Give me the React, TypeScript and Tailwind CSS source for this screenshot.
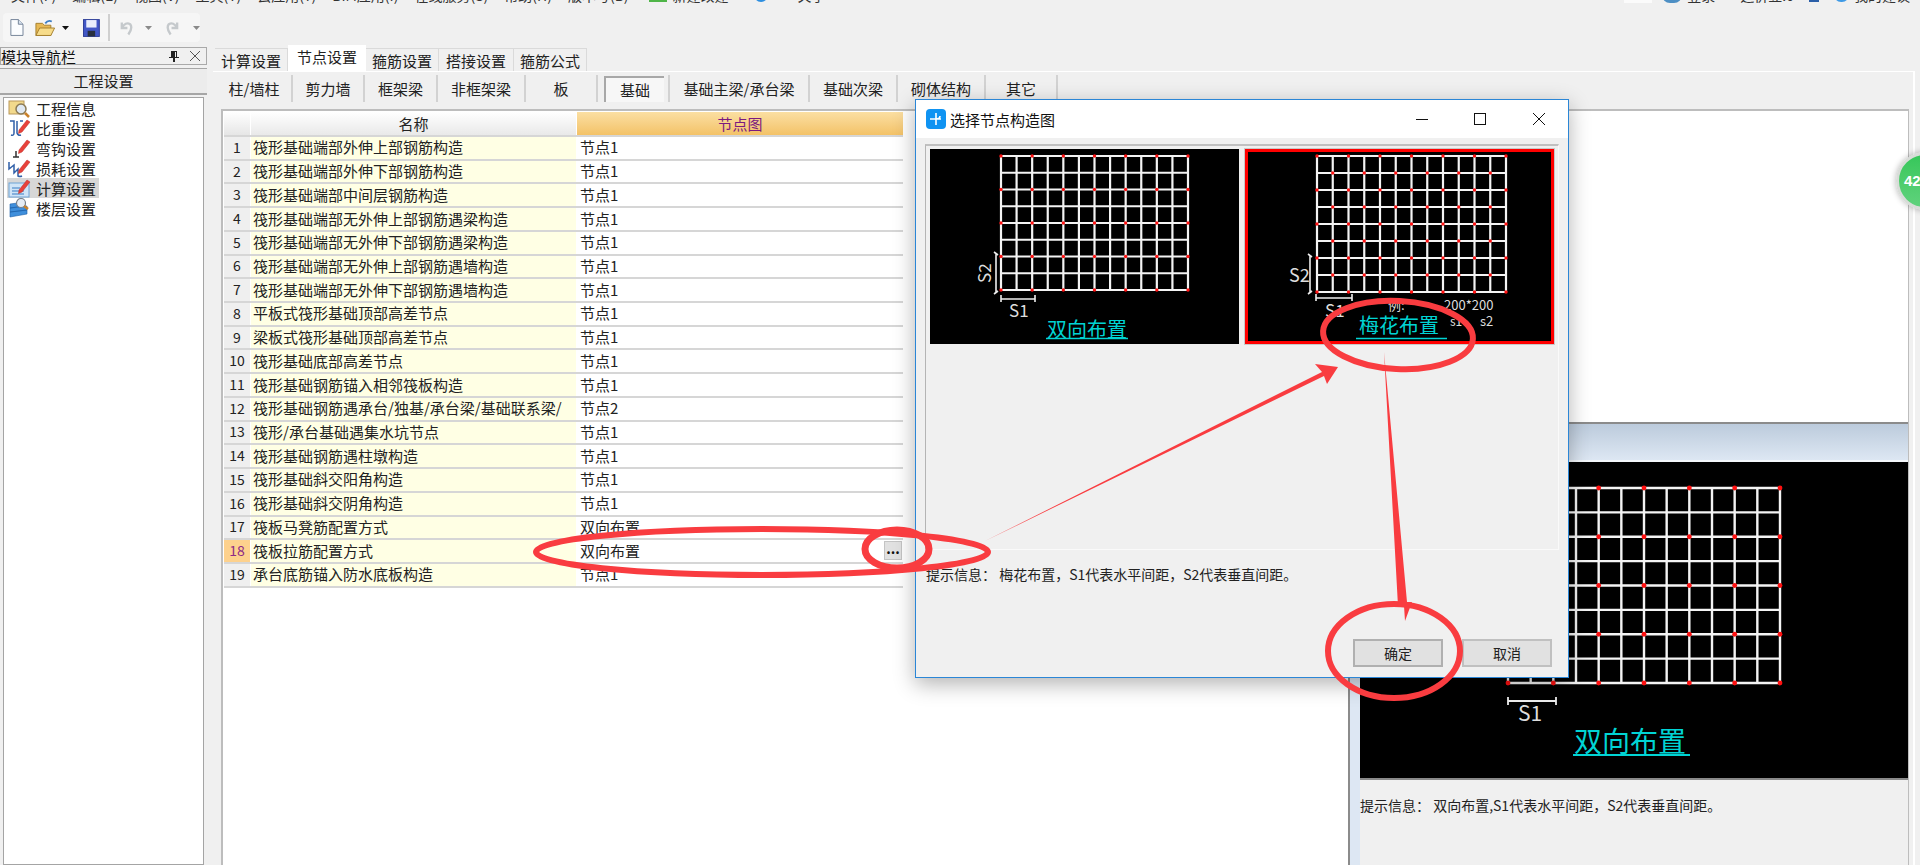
const rows: [string, string][] = [
  ['筏形基础端部外伸上部钢筋构造', '节点1'],
  ['筏形基础端部外伸下部钢筋构造', '节点1'],
  ['筏形基础端部中间层钢筋构造', '节点1'],
  ['筏形基础端部无外伸上部钢筋遇梁构造', '节点1'],
  ['筏形基础端部无外伸下部钢筋遇梁构造', '节点1'],
  ['筏形基础端部无外伸上部钢筋遇墙构造', '节点1'],
  ['筏形基础端部无外伸下部钢筋遇墙构造', '节点1'],
  ['平板式筏形基础顶部高差节点', '节点1'],
  ['梁板式筏形基础顶部高差节点', '节点1'],
  ['筏形基础底部高差节点', '节点1'],
  ['筏形基础钢筋锚入相邻筏板构造', '节点1'],
  ['筏形基础钢筋遇承台/独基/承台梁/基础联系梁/', '节点2'],
  ['筏形/承台基础遇集水坑节点', '节点1'],
  ['筏形基础钢筋遇柱墩构造', '节点1'],
  ['筏形基础斜交阳角构造', '节点1'],
  ['筏形基础斜交阴角构造', '节点1'],
  ['筏板马凳筋配置方式', '双向布置'],
  ['筏板拉筋配置方式', '双向布置'],
  ['承台底筋锚入防水底板构造', '节点1'],
];

const tabs = [
  { label: '计算设置', w: 'w-[73px]' },
  { label: '节点设置', w: 'w-[78px]', active: true },
  { label: '箍筋设置', w: 'w-[73px]' },
  { label: '搭接设置', w: 'w-[75px]' },
  { label: '箍筋公式', w: 'w-[73px]' },
];

const subTabs = [
  { label: '柱/墙柱', w: 'w-[76px]' },
  { label: '剪力墙', w: 'w-[72px]' },
  { label: '框架梁', w: 'w-[73px]' },
  { label: '非框架梁', w: 'w-[88px]' },
  { label: '板', w: 'w-[72px]' },
  { label: '基础', w: 'w-[72px]', pressed: true },
  { label: '基础主梁/承台梁', w: 'w-[140px]' },
  { label: '基础次梁', w: 'w-[88px]' },
  { label: '砌体结构', w: 'w-[88px]' },
  { label: '其它', w: 'w-[72px]' },
];

const menus = ['文件(F)', '编辑(E)', '视图(V)', '工具(T)', '云应用(Y)', 'BIM应用(I)', '在线服务(S)', '帮助(H)', '版本号(B)'];

// full-width colon and comma, as in the dialog's own hint text
const hintDialog = '提示信息\uFF1A 梅花布置\uFF0CS1代表水平间距\uFF0CS2代表垂直间距。';
const hintPreview = '提示信息\uFF1A 双向布置,S1代表水平间距\uFF0CS2代表垂直间距。';

function NavIcon({ kind }: { kind: number }) {
  const pencil = <path d="M12 12 L20 2 L23 4 L15 14 L11.5 15.5 Z" fill="#e8413a" stroke="#b92c26" strokeWidth="0.5" />;
  return (
    <svg width="24" height="20" viewBox="0 0 24 20" className="shrink-0">
      {kind === 0 && (
        <>
          <rect x="2" y="3" width="15" height="13" fill="#f2d98c" stroke="#b9975a" />
          <circle cx="14" cy="11" r="5" fill="#dfe8f2" stroke="#8b7a55" strokeWidth="1.5" />
          <path d="M18 15 L22 19" stroke="#c9812a" strokeWidth="2.5" />
        </>
      )}
      {kind === 1 && (
        <>
          <path d="M3 3 H7 V15 Q7 18 4 17 M10 3 V15 Q11 18 14 17 M13 3 L16 3" fill="none" stroke="#2f5fa8" strokeWidth="1.5" />
          {pencil}
        </>
      )}
      {kind === 2 && (
        <>
          <path d="M9 13 V19 M6 19 H12" fill="none" stroke="#333" strokeWidth="1.5" />
          {pencil}
        </>
      )}
      {kind === 3 && (
        <>
          <path d="M2 4 V11 L7 7 V15 L11 11 V18 Q13 19 15 18" fill="none" stroke="#2f5fa8" strokeWidth="1.5" />
          {pencil}
        </>
      )}
      {kind === 4 && (
        <>
          <rect x="2" y="5" width="20" height="14" fill="#cfe4f7" stroke="#6ea3d6" />
          <path d="M5 10 H13 M5 13 H17 M5 16 H17" stroke="#3a7cc4" strokeWidth="1.2" />
          {pencil}
        </>
      )}
      {kind === 5 && (
        <>
          <path d="M3 6 L18 4 V8 L3 10 Z M3 10 L20 8 V12 L3 14 Z M3 14 L20 12 V16 L3 19 Z" fill="#3f8fdc" stroke="#1d5fa8" strokeWidth="0.6" />
          <circle cx="14" cy="5" r="4.5" fill="#e6edf5" stroke="#77808c" strokeWidth="1.2" />
          <path d="M17 8 L21 11" stroke="#c9812a" strokeWidth="2.5" />
        </>
      )}
    </svg>
  );
}

function Caret({ muted }: { muted?: boolean }) {
  return (
    <svg width="7" height="4" viewBox="0 0 7 4" className="shrink-0">
      <path d="M0 0 H7 L3.5 4 Z" fill={muted ? '#8a8a8a' : '#111'} />
    </svg>
  );
}

function TopMenu() {
  // the capture starts below the menu text, only its lower edge shows
  return (
    <div className="h-[13px] shrink-0 overflow-hidden">
      <div className="mt-[-13px] flex h-[16px] items-center pl-[11px] pr-[10px] text-[14px] leading-none text-[#333]">
        <div className="flex gap-[16px] whitespace-nowrap">
          {menus.map((m) => <span key={m}>{m}</span>)}
        </div>
        <span className="ml-[20px] h-[14px] w-[18px] bg-[#4fb548]" />
        <span className="ml-[6px] whitespace-nowrap">新建改建</span>
        <span className="ml-[25px] h-[14px] w-[14px] rounded-full bg-[#2e8fe0]" />
        <span className="ml-[30px] whitespace-nowrap">关于</span>
        <span className="ml-auto h-[16px] w-[28px] bg-[#fbfbfb]" />
        <span className="ml-[10px] h-[16px] w-[20px] rounded-full bg-[#4d8fc4]" />
        <span className="ml-[5px] whitespace-nowrap">登录</span>
        <span className="ml-[25px] whitespace-nowrap">造价豆:0</span>
        <span className="ml-[15px] h-[14px] w-[10px] bg-[#2b5fa8]" />
        <span className="ml-[15px] h-[14px] w-[15px] rounded-full bg-[#3f9ae6]" />
        <span className="ml-[5px] whitespace-nowrap">我的建议</span>
      </div>
    </div>
  );
}

function Toolbar() {
  return (
    <div className="ml-[3px] flex h-[29px] w-[197px] items-center rounded-sm bg-[#f6f6f6] pl-[6px]">
      <svg width="16" height="19" viewBox="0 0 16 19">
        <path d="M2 1 H10 L15 6 V18 H2 Z" fill="#fbfdff" stroke="#6f7f95" />
        <path d="M10 1 V6 H15" fill="#d6e1ee" stroke="#6f7f95" />
      </svg>
      <svg width="22" height="20" viewBox="0 0 22 20" className="ml-[11px]">
        <path d="M1 5 H8 L10 7 H17 V18 H1 Z" fill="#e7b955" stroke="#a27d2c" />
        <path d="M1 18 L5 10 H21 L17 18 Z" fill="#f7dc8a" stroke="#a27d2c" />
        <path d="M11 5 Q14 1 18 3" fill="none" stroke="#3f7fc4" strokeWidth="2" />
      </svg>
      <span className="ml-[7px]"><Caret /></span>
      <svg width="18" height="20" viewBox="0 0 18 20" className="ml-[14px]">
        <rect x="0.5" y="1" width="17" height="18" fill="#4257c6" stroke="#2a3a94" />
        <rect x="3.5" y="1.5" width="11" height="8" fill="#e9eefc" />
        <rect x="5" y="13" width="8" height="6" fill="#28303f" />
      </svg>
      <div className="ml-[8px] h-[27px] w-[2px] bg-[#d0d0d0]" />
      <svg width="16" height="18" viewBox="0 0 16 18" className="ml-[9px]">
        <path d="M3 3 V9 H9 M3 9 Q7 2 12 5 Q15 9 10 16" fill="none" stroke="#c5c9cc" strokeWidth="2.5" />
      </svg>
      <span className="ml-[11px]"><Caret muted /></span>
      <svg width="16" height="18" viewBox="0 0 16 18" className="ml-[13px]">
        <path d="M13 3 V9 H7 M13 9 Q9 2 4 5 Q1 9 6 16" fill="none" stroke="#c5c9cc" strokeWidth="2.5" />
      </svg>
      <span className="ml-[13px]"><Caret muted /></span>
    </div>
  );
}

function LeftPanel() {
  const items = ['工程信息', '比重设置', '弯钩设置', '损耗设置', '计算设置', '楼层设置'];
  return (
    <div className="flex w-[207px] shrink-0 flex-col">
      <div className="flex h-[18px] items-center justify-between border border-[#a9a9a9] bg-[#f0f0f0] pr-[6px] text-[15px] leading-none text-[#111]">
        <span>模块导航栏</span>
        <div className="flex items-center gap-[11px]">
          <svg width="10" height="12" viewBox="0 0 10 12">
            <path d="M2 1 H8 V7 H10 V8 H6 V12 H4 V8 H0 V7 H2 Z M6 2 V7 H7 V2 Z" fill="#222" fillRule="evenodd" />
          </svg>
          <svg width="10" height="10" viewBox="0 0 10 10">
            <path d="M0 0 L10 10 M10 0 L0 10" stroke="#555" strokeWidth="1" />
          </svg>
        </div>
      </div>
      <div className="mt-[3px] flex h-[27px] items-center justify-center border-b-2 border-t border-[#a6a6a6] bg-[#ececec] text-[15px] text-[#222]">
        工程设置
      </div>
      <div className="mt-[2px] ml-[3px] mr-[3px] flex-1 border border-[#a4a4a4] bg-white pl-[3px]">
        {items.map((item, i) => (
          <div key={item} className={`flex h-[20px] w-[92px] items-center gap-[5px] text-[15px] leading-none text-[#222] ${i === 4 ? 'bg-[#d7d7d7]' : ''}`}>
            <NavIcon kind={i} />
            <span className="whitespace-nowrap">{item}</span>
          </div>
        ))}
      </div>
    </div>
  );
}

function TabBar() {
  return (
    <div className="flex h-[24px] items-end pl-[8px]">
      {tabs.map((t) => (
        <div
          key={t.label}
          className={`flex items-center justify-center text-[15px] leading-none text-[#222] ${t.w} ${
            t.active ? 'h-[26px] bg-white pb-[4px]' : 'h-[23px] border-r border-t border-[#dadada] bg-[#f0f0f0]'
          }`}
        >
          {t.label}
        </div>
      ))}
    </div>
  );
}

function SubBar() {
  return (
    <div className="flex h-[37px] items-start bg-[#f0f0f0] pl-[4px] pt-[3px]">
      {subTabs.map((t) => (
        <div key={t.label} className={`flex h-[27px] items-center justify-center border-r-2 border-[#d2d2d2] text-[15px] leading-none text-[#222] ${t.w}`}>
          {t.pressed ? (
            <span className="ml-[2px] flex h-[26px] w-[60px] items-center justify-center border-l-2 border-t-2 border-[#a8a8a8] bg-[#f7f7f7]">{t.label}</span>
          ) : (
            t.label
          )}
        </div>
      ))}
    </div>
  );
}

function NodeTable() {
  return (
    <div className="w-[680px] shrink-0 pl-[1px] pt-[1px] text-[15px] leading-none text-[#222]">
      <div className="flex h-[23px]">
        <div className="mr-[1px] w-[26px] bg-gradient-to-b from-white to-[#e6e6e6]" />
        <div className="mr-[1px] flex w-[325px] items-center justify-center bg-gradient-to-b from-white to-[#e9e9e9]">名称</div>
        <div className="flex w-[326px] items-center justify-center bg-gradient-to-b from-[#fbdfa2] to-[#f3c267] text-[#7b1a80]">节点图</div>
      </div>
      {rows.map(([name, value], i) => {
        const current = i === 17;
        return (
          <div key={i} className="flex h-[23.72px] border-t-2 border-[#d6d6d6]">
            <div className={`mr-[1px] flex w-[26px] items-center justify-center pb-[2px] text-[14px] ${current ? 'bg-[#fdd18d] text-[#8e2a86]' : 'bg-[#efefef]'}`}>{i + 1}</div>
            <div className="mr-[1px] flex w-[325px] items-center overflow-hidden whitespace-nowrap bg-[#ffffe4] pb-[2px] pl-[2px]">{name}</div>
            <div className="relative flex w-[326px] items-center bg-white pb-[2px] pl-[3px]">
              {value}
              {current && (
                <div className="absolute right-[1px] top-[1px] flex h-[19px] w-[18px] items-center justify-center border border-[#c4c4c4] bg-[#e1e1e1] pb-[6px] text-[14px] font-bold text-[#111]">
                  ...
                </div>
              )}
            </div>
          </div>
        );
      })}
      <div className="h-[2px] border-t-2 border-[#d6d6d6]" />
    </div>
  );
}

function range(n: number, start: number, step: number) {
  return Array.from({ length: n }, (_, i) => start + i * step);
}

// rebar plan: 12 x 8 cells, red ties on every second crossing
function PlanGrid({ x, y, w, h, staggered, stroke = 2.2, dot = 1.7 }: { x: number; y: number; w: number; h: number; staggered?: boolean; stroke?: number; dot?: number }) {
  const xs = range(13, x, w / 12);
  const ys = range(9, y, h / 8);
  return (
    <g>
      {xs.map((v) => <line key={v} x1={v} x2={v} y1={y} y2={y + h} stroke="#f4f4f4" strokeWidth={stroke} />)}
      {ys.map((v) => <line key={v} x1={x} x2={x + w} y1={v} y2={v} stroke="#f4f4f4" strokeWidth={stroke} />)}
      {xs.map((vx, i) =>
        ys.map((vy, j) =>
          (i % 2 === 0 && j % 2 === 0) || (staggered && i % 2 === 1 && j % 2 === 1) ? (
            <circle key={`${i}-${j}`} cx={vx} cy={vy} r={dot} fill="#ff1010" />
          ) : null,
        ),
      )}
    </g>
  );
}

function TwoWayTile() {
  return (
    <div className="h-[195px] w-[309px] bg-black">
      <svg width="309" height="195" viewBox="0 0 309 195" fontFamily="'Noto Sans CJK SC', sans-serif">
        <PlanGrid x={71} y={7} w={187} h={134} />
        <path d="M66 104 V144 M64 103 L68 106 M64 145 L68 142" stroke="#eee" strokeWidth="1.6" fill="none" />
        <text transform="translate(61 134) rotate(-90)" fontSize="17" fill="#ddd">S2</text>
        <path d="M71 150 H105 M71 146 V153 M105 146 V153" stroke="#eee" strokeWidth="1.6" fill="none" />
        <text x="79" y="168" fontSize="17" fill="#ddd">S1</text>
        <text x="117" y="188" fontSize="20" fill="#00d4d4">双向布置</text>
        <line x1="116" x2="198" y1="189.5" y2="189.5" stroke="#00d4d4" strokeWidth="1.5" />
      </svg>
    </div>
  );
}

function QuincunxTile() {
  return (
    <div className="h-[195px] w-[309px] border-[3px] border-[#ff0000] bg-black shadow-[0_0_0_1px_#c8c8c8]">
      <svg width="303" height="189" viewBox="3 3 303 189" fontFamily="'Noto Sans CJK SC', sans-serif">
        <PlanGrid x={72} y={7} w={189} h={136} staggered />
        <path d="M65 106 V144 M63 105 L67 108 M63 145 L67 142" stroke="#eee" strokeWidth="1.6" fill="none" />
        <text x="44" y="133" fontSize="18" fill="#ddd">S2</text>
        <path d="M71 149 H107 M71 145 V152 M107 145 V152" stroke="#eee" strokeWidth="1.6" fill="none" />
        <text x="80" y="168" fontSize="17" fill="#ddd">S1</text>
        <text x="143" y="161" fontSize="13" fill="#ddd">例:</text>
        <text x="199" y="161" fontSize="13" fill="#ddd">200*200</text>
        <text x="205" y="177" fontSize="12" fill="#ddd">s1</text>
        <text x="235" y="177" fontSize="13" fill="#ddd">s2</text>
        <text x="114" y="184" fontSize="20" fill="#00d4d4">梅花布置</text>
        <line x1="111" x2="202" y1="189.5" y2="189.5" stroke="#00d4d4" strokeWidth="1.5" />
      </svg>
    </div>
  );
}

function PreviewPanel() {
  return (
    <div className="ml-auto mt-[311px] w-[560px] flex-1 border-l-2 border-t-2 border-[#8b8b8b] bg-[#dde7f3]">
      <div className="h-[36px] bg-gradient-to-b from-[#bccbdc] to-[#dde7f3]" />
      <div className="ml-[10px] h-[320px] border-b-2 border-t-2 border-b-[#8a8a8a] border-t-[#f4f7fb] bg-black">
        <svg width="538" height="316" viewBox="0 0 538 316" fontFamily="'Noto Sans CJK SC', sans-serif">
          <PlanGrid x={148} y={26} w={272} h={195} stroke={2.4} dot={2.4} />
          <path d="M148 239 H196 M148 235 V243 M196 235 V243" stroke="#eee" strokeWidth="1.8" fill="none" />
          <text x="158" y="259" fontSize="21" fill="#ddd">S1</text>
          <text x="214" y="290" fontSize="28" fill="#00d4d4">双向布置</text>
          <line x1="213" x2="330" y1="293" y2="293" stroke="#00d4d4" strokeWidth="2" />
        </svg>
      </div>
      <div className="ml-[10px] h-full bg-[#f0f0f0] pt-[18px] text-[14px] leading-none whitespace-pre text-[#222]">
        {hintPreview}
      </div>
    </div>
  );
}

function NodeDialog() {
  return (
    <div className="absolute left-[915px] top-[99px] z-20 flex h-[579px] w-[654px] flex-col border border-[#2b86d6] bg-[#f0f0f0] shadow-[0_6px_20px_rgba(0,0,0,0.3)]">
      <div className="flex h-[38px] shrink-0 items-center bg-white pl-[10px] text-[15px] leading-none text-[#111]">
        <div className="flex h-[20px] w-[20px] items-center justify-center rounded-[4px] bg-[#0f93f2]">
          <svg width="14" height="14" viewBox="0 0 14 14">
            <path d="M7 1 V13 M1 7 H7 Q11 7 11 4 M7 7 H12" fill="none" stroke="white" strokeWidth="1.6" />
          </svg>
        </div>
        <span className="ml-[4px]">选择节点构造图</span>
        <div className="ml-auto flex h-full items-center pr-[23px]">
          <svg width="12" height="12" viewBox="0 0 12 12"><line x1="0" x2="12" y1="6.5" y2="6.5" stroke="#111" /></svg>
          <svg width="12" height="12" viewBox="0 0 12 12" className="ml-[46px]"><rect x="0.5" y="0.5" width="11" height="11" fill="none" stroke="#111" /></svg>
          <svg width="12" height="12" viewBox="0 0 12 12" className="ml-[47px]"><path d="M0 0 L12 12 M12 0 L0 12" stroke="#111" /></svg>
        </div>
      </div>
      <div className="ml-[9px] mr-[9px] mt-[6px] h-[406px] shrink-0 border-b border-l border-r border-t-2 border-b-[#fafafa] border-l-[#b4b4b4] border-r-[#fafafa] border-t-[#c0c0c0] pl-[4px] pt-[3px]">
        <div className="flex gap-[6px]">
          <TwoWayTile />
          <QuincunxTile />
        </div>
      </div>
      <div className="ml-[10px] mt-[17px] text-[14px] leading-none whitespace-pre text-[#222]">
        {hintDialog}
      </div>
      <div className="mt-auto mb-[10px] flex justify-end gap-[19px] pr-[16px] text-[14px] text-[#222]">
        <button className="h-[28px] w-[90px] border-2 border-[#b0b0b0] bg-[#e1e1e1]">确定</button>
        <button className="h-[28px] w-[90px] border-2 border-[#c0c0c0] bg-[#e1e1e1]">取消</button>
      </div>
    </div>
  );
}

function Annotations() {
  const red = '#f93c40';
  return (
    <svg className="pointer-events-none absolute left-0 top-0 z-30" width="1920" height="865" viewBox="0 0 1920 865">
      <ellipse cx="762" cy="552" rx="226" ry="23" fill="none" stroke={red} strokeWidth="6" />
      <ellipse cx="897" cy="549" rx="32" ry="19" fill="none" stroke={red} strokeWidth="7" />
      <ellipse cx="1398" cy="335" rx="75" ry="34" transform="rotate(3 1398 335)" fill="none" stroke={red} strokeWidth="6" />
      <ellipse cx="1394" cy="651" rx="66" ry="47" fill="none" stroke={red} strokeWidth="6" />
      <path d="M985 541 L1322 372 L1315 364 L1338 367 L1327 384 L1324 376 Z" fill={red} />
      <path d="M1384 352 L1398 606 L1404 606 L1405 621 L1412 602 L1407 602 Z" fill={red} />
    </svg>
  );
}

export default function App() {
  return (
    <div className="relative flex h-[865px] w-[1920px] flex-col overflow-hidden bg-[#f0f0f0] font-['Noto_Sans_CJK_SC',sans-serif]">
      <TopMenu />
      <Toolbar />
      <div className="mt-[5px] flex min-h-0 flex-1">
        <LeftPanel />
        <div className="flex min-w-0 flex-1 flex-col pr-[5px]">
          <TabBar />
          <div className="ml-[6px] flex min-h-0 flex-1 flex-col border-r-2 border-t border-white bg-[#f0f0f0] pr-[3px]">
            <SubBar />
            <div className="ml-[8px] mr-[1px] flex min-h-0 flex-1 border-l-2 border-r border-t-2 border-[#bdbdbd] bg-white">
              <NodeTable />
              <div className="flex min-w-0 flex-1 flex-col">
                <PreviewPanel />
              </div>
            </div>
          </div>
        </div>
      </div>
      <NodeDialog />
      <div className="absolute left-[1896px] top-[152px] z-10 flex h-[58px] w-[58px] items-center rounded-full border-[3px] border-[#d8dcd8] bg-gradient-to-b from-[#35c75a] to-[#5fd27c] pl-[5px] text-[15px] font-bold text-white shadow-[0_0_6px_rgba(0,0,0,0.3)] font-['Liberation_Sans',sans-serif]">
        42
      </div>
      <Annotations />
    </div>
  );
}
